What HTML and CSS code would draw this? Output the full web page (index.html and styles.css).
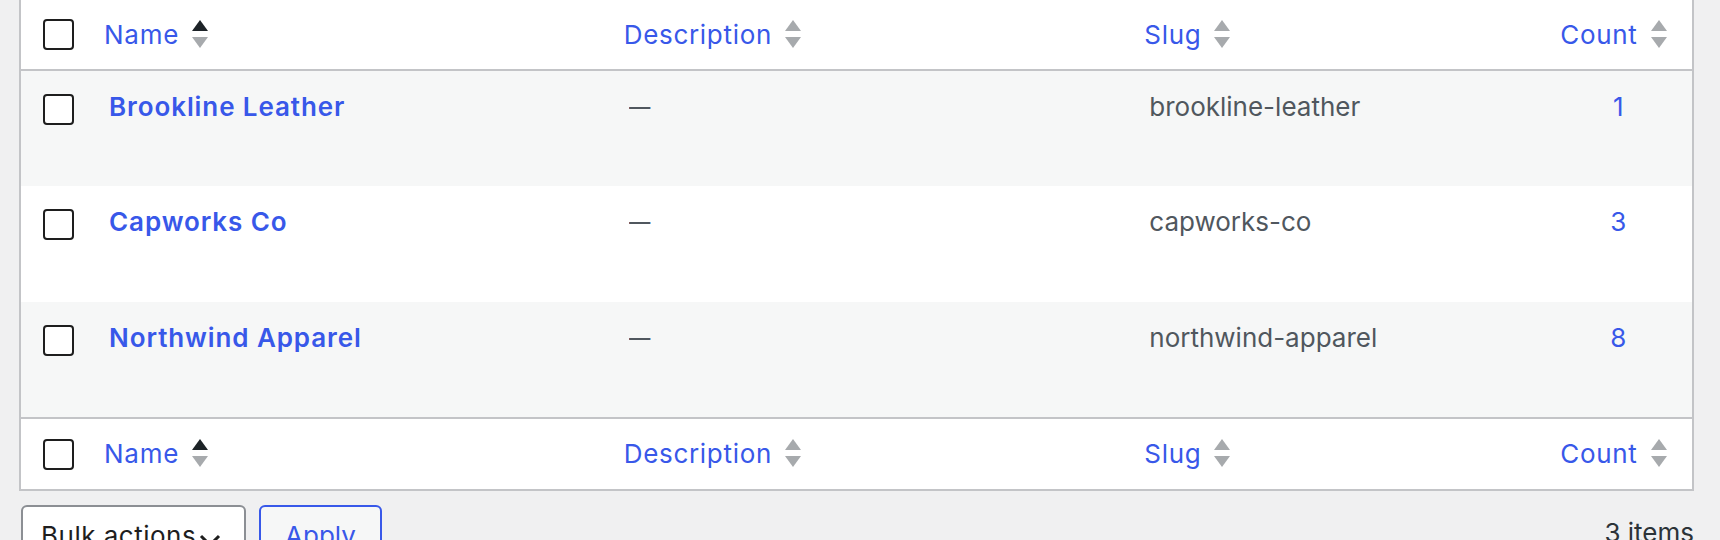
FILE: index.html
```html
<!DOCTYPE html>
<html lang="en">
<head>
<meta charset="utf-8">
<title>Brands</title>
<link rel="stylesheet" href="styles.css">
</head>
<body>
<div class="wrap">
  <table class="list-table">
    <colgroup>
      <col class="c-check">
      <col class="c-name">
      <col class="c-desc">
      <col class="c-slug">
      <col class="c-count">
    </colgroup>
    <thead>
      <tr>
        <th class="check"><span class="cb"></span></th>
        <th><a class="sort-link" href="#">Name <span class="sorter"><svg viewBox="0 0 16 28" width="16" height="28"><path class="up active" d="M8 0 L16 11 L0 11 Z"/><path class="down" d="M0 17 L16 17 L8 28 Z"/></svg></span></a></th>
        <th><a class="sort-link" href="#">Description <span class="sorter"><svg viewBox="0 0 16 28" width="16" height="28"><path class="up" d="M8 0 L16 11 L0 11 Z"/><path class="down" d="M0 17 L16 17 L8 28 Z"/></svg></span></a></th>
        <th><a class="sort-link" href="#">Slug <span class="sorter"><svg viewBox="0 0 16 28" width="16" height="28"><path class="up" d="M8 0 L16 11 L0 11 Z"/><path class="down" d="M0 17 L16 17 L8 28 Z"/></svg></span></a></th>
        <th class="num"><a class="sort-link" href="#">Count <span class="sorter"><svg viewBox="0 0 16 28" width="16" height="28"><path class="up" d="M8 0 L16 11 L0 11 Z"/><path class="down" d="M0 17 L16 17 L8 28 Z"/></svg></span></a></th>
      </tr>
    </thead>
    <tbody>
      <tr class="alt">
        <td class="check"><span class="cb"></span></td>
        <td><a class="row-title" href="#">Brookline Leather</a></td>
        <td class="muted"><span class="dash">—</span></td>
        <td class="muted">brookline-leather</td>
        <td class="num"><a href="#">1</a></td>
      </tr>
      <tr>
        <td class="check"><span class="cb"></span></td>
        <td><a class="row-title" href="#">Capworks Co</a></td>
        <td class="muted"><span class="dash">—</span></td>
        <td class="muted">capworks-co</td>
        <td class="num"><a href="#">3</a></td>
      </tr>
      <tr class="alt">
        <td class="check"><span class="cb"></span></td>
        <td><a class="row-title" href="#">Northwind Apparel</a></td>
        <td class="muted"><span class="dash">—</span></td>
        <td class="muted">northwind-apparel</td>
        <td class="num"><a href="#">8</a></td>
      </tr>
    </tbody>
    <tfoot>
      <tr>
        <th class="check"><span class="cb"></span></th>
        <th><a class="sort-link" href="#">Name <span class="sorter"><svg viewBox="0 0 16 28" width="16" height="28"><path class="up active" d="M8 0 L16 11 L0 11 Z"/><path class="down" d="M0 17 L16 17 L8 28 Z"/></svg></span></a></th>
        <th><a class="sort-link" href="#">Description <span class="sorter"><svg viewBox="0 0 16 28" width="16" height="28"><path class="up" d="M8 0 L16 11 L0 11 Z"/><path class="down" d="M0 17 L16 17 L8 28 Z"/></svg></span></a></th>
        <th><a class="sort-link" href="#">Slug <span class="sorter"><svg viewBox="0 0 16 28" width="16" height="28"><path class="up" d="M8 0 L16 11 L0 11 Z"/><path class="down" d="M0 17 L16 17 L8 28 Z"/></svg></span></a></th>
        <th class="num"><a class="sort-link" href="#">Count <span class="sorter"><svg viewBox="0 0 16 28" width="16" height="28"><path class="up" d="M8 0 L16 11 L0 11 Z"/><path class="down" d="M0 17 L16 17 L8 28 Z"/></svg></span></a></th>
      </tr>
    </tfoot>
  </table>

  <div class="tablenav">
    <div class="actions">
      <div class="select"><span class="select-label">Bulk actions</span><svg class="chev" viewBox="0 0 22 14" width="22" height="14"><path d="M2 2 L11 11 L20 2" fill="none" stroke="#1e1e1e" stroke-width="3"/></svg></div>
      <button class="btn" type="button">Apply</button>
    </div>
    <div class="count-label">3 items</div>
  </div>
</div>
</body>
</html>
```

FILE: styles.css
```css
html, body {
  margin: 0;
  padding: 0;
  background: #f0f0f1;
  height: 540px;
  overflow: hidden;
}

body {
  font-family: Inter, "Noto Sans", Roboto, sans-serif;
  font-size: 26px;
  line-height: 36px;
  color: #2c3338;
}

.wrap {
  padding: 0 26px 0 19px;
}

.list-table {
  width: 100%;
  border-collapse: collapse;
  table-layout: fixed;
  background: #fff;
  border-left: 2px solid #c3c4c7;
  border-right: 2px solid #c3c4c7;
  border-bottom: 2px solid #c3c4c7;
}

.c-check { width: 64px; }
.c-name { width: 519px; }
.c-desc { width: 520px; }
.c-slug { width: 416px; }
.c-count { width: 152px; }

a {
  color: #3858e9;
  text-decoration: none;
}

thead th {
  height: 70px;
  border-bottom: 2px solid #c3c4c7;
}

tfoot th {
  height: 72px;
  border-top: 2px solid #c3c4c7;
}

th {
  padding: 0 0 0 20px;
  text-align: left;
  font-weight: 400;
  vertical-align: middle;
  box-sizing: border-box;
}

th.check {
  padding: 0 0 0 22px;
}

th.num {
  text-align: center;
  padding: 0 6px 0 0;
}

.sort-link {
  display: inline-flex;
  align-items: center;
  gap: 13px;
  letter-spacing: 0.7px;
}

.sorter {
  display: inline-flex;
  margin-top: -2px;
}

.sorter .up, .sorter .down {
  fill: #a7aaad;
}

.sorter .active {
  fill: #1d2327;
}

tbody tr {
  background: #fff;
}

tbody tr.alt {
  background: #f6f7f7;
}

td {
  height: 116px;
  box-sizing: border-box;
  padding: 18px 0 0 25px;
  vertical-align: top;
}

td.check {
  padding: 23px 0 0 22px;
}

td.num {
  text-align: center;
  padding-left: 4px;
}

td.muted {
  color: #50575e;
}

.dash {
  display: inline-block;
  transform: scaleX(0.82);
  transform-origin: left center;
}

.row-title {
  font-weight: 600;
  letter-spacing: 0.9px;
}

.cb {
  display: block;
  width: 31px;
  height: 31px;
  box-sizing: border-box;
  border: 2px solid #1e1e1e;
  border-radius: 4px;
  background: #fff;
}

.tablenav {
  display: flex;
  justify-content: space-between;
  align-items: flex-start;
  margin-top: 14px;
}

.actions {
  display: flex;
  gap: 13px;
  padding-left: 2px;
}

.select {
  display: flex;
  align-items: flex-start;
  gap: 3px;
  width: 225px;
  box-sizing: border-box;
  padding: 11px 10px 16px 18px;
  border: 2px solid #8c8f94;
  border-radius: 6px;
  background: #fff;
  color: #1e1e1e;
}

.select-label {
  letter-spacing: 0.5px;
}

.chev {
  margin-top: 16px;
}

.btn {
  font: inherit;
  width: 123px;
  box-sizing: border-box;
  padding: 11px 0 16px 0;
  border: 2px solid #3858e9;
  border-radius: 6px;
  background: #f6f7f7;
  color: #3858e9;
  text-align: center;
}

.count-label {
  margin-top: 10px;
  color: #2c3338;
}
```
